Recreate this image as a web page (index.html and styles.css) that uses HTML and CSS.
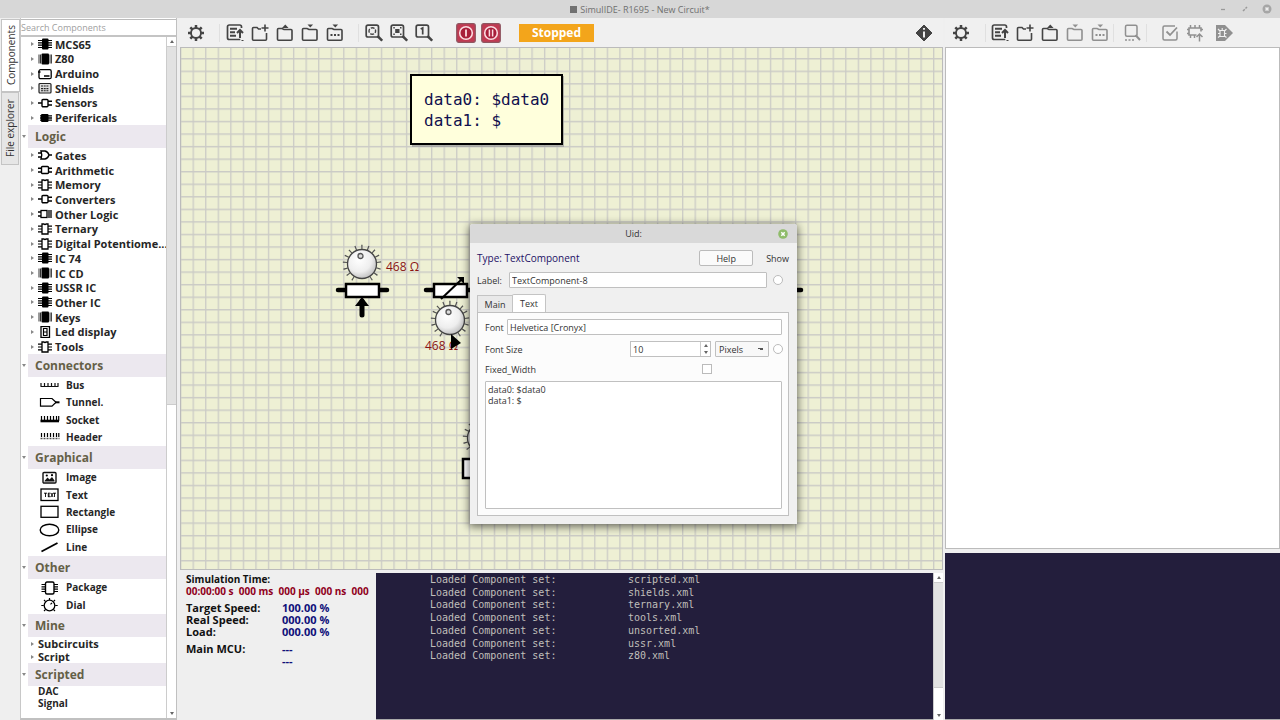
FILE: index.html
```html
<!DOCTYPE html>
<html lang="en">
<head>
<meta charset="utf-8">
<title>SimulIDE- R1695 - New Circuit*</title>
<link rel="stylesheet" href="styles.css">
</head>
<body>
<svg class="defs" aria-hidden="true">
  <defs>
    <symbol id="chip" viewBox="0 0 14 12"><rect x="4" y="0.5" width="6.5" height="11" rx="1" fill="#000"/><path d="M0 2.5h14M0 4.8h14M0 7.2h14M0 9.5h14" stroke="#000" stroke-width="1.2"/></symbol>
    <symbol id="chip-wide" viewBox="0 0 14 12"><rect x="3.5" y="0.5" width="7.5" height="11" rx="1" fill="#000"/><path d="M1 1.5v9M2.5 1.5v9M12 1.5v9M13.4 1.5v9" stroke="#333" stroke-width="1"/></symbol>
    <symbol id="chip-small" viewBox="0 0 14 12"><rect x="3" y="2" width="7.5" height="8" rx="1" fill="#000"/><path d="M2 3.8h3M2 6h3M2 8.2h3M10 3.8h4M10 6h4M10 8.2h4" stroke="#000" stroke-width="1.3"/></symbol>
    <symbol id="chip-open" viewBox="0 0 14 12"><path d="M4 1h2q1 1 2 0h2v10H4z" fill="#fff" stroke="#000" stroke-width="1.3"/><path d="M0 3.2h4M0 6h4M0 8.8h4M10 3.2h4M10 6h4M10 8.8h4" stroke="#000" stroke-width="1.2"/></symbol>
    <symbol id="board" viewBox="0 0 14 12"><rect x="1" y="1.7" width="12.2" height="9" rx="1.5" fill="none" stroke="#000" stroke-width="1.3"/><path d="M0 4h2.5M6 8h5.5" stroke="#000" stroke-width="1.6"/></symbol>
    <symbol id="shield" viewBox="0 0 14 12"><rect x="1" y="1.5" width="12" height="9.5" rx="1" fill="#ddd" stroke="#222" stroke-width="1.2"/><path d="M3 4h8M3 6.6h8M3 8.8h8" stroke="#222" stroke-width="1.1" stroke-dasharray="2 .7"/></symbol>
    <symbol id="sensor" viewBox="0 0 14 12"><rect x="4" y="2.5" width="6" height="7.3" rx="1" fill="none" stroke="#000" stroke-width="1.4"/><path d="M0 6h4M10 4.3h4M10 8h4" stroke="#000" stroke-width="1.4"/></symbol>
    <symbol id="gate" viewBox="0 0 14 12"><path d="M3 2h4q3 .7 4 4-1 3.300-4 4H3q1.500-4 0-8zM0 4h3.500M0 8h3.500M11 6h3" fill="none" stroke="#000" stroke-width="1.4"/></symbol>
    <symbol id="arith" viewBox="0 0 14 12"><rect x="3.500" y="2.500" width="7" height="7" rx="1" fill="none" stroke="#000" stroke-width="1.400"/><path d="M0 4.300h3.500M0 8h3.500M10.500 4.300H14M10.500 8H14" stroke="#000" stroke-width="1.400"/></symbol>
    <symbol id="mixed" viewBox="0 0 14 12"><rect x="3" y="2.500" width="6" height="7" fill="none" stroke="#000" stroke-width="1.300"/><path d="M0 4h3M0 8h3" stroke="#000" stroke-width="1.300"/><path d="M11 2v8M13 2v8" stroke="#222" stroke-width="1.500"/></symbol>
    <symbol id="led" viewBox="0 0 14 12"><rect x="3" y="0.500" width="8.500" height="11" fill="#fff" stroke="#000" stroke-width="1.300"/><path d="M5.500 2.500h3.500v3.500H5.500zM5.500 6h3.500v3.500H5.500z" fill="none" stroke="#000" stroke-width="1.200"/></symbol>

    <symbol id="bus" viewBox="0 0 20 14"><path d="M1 7.500h18M1.500 4v3.500M5 4v3.500M8.500 4v3.500M12 4v3.500M15.500 4v3.500M18.500 4v3.500" stroke="#111" stroke-width="1.200" fill="none"/></symbol>
    <symbol id="tunnel" viewBox="0 0 20 14"><path d="M1 2.500h11.500l4 3.800-4 3.800H1z" fill="none" stroke="#000" stroke-width="1.200"/><path d="M15.500 6.300H20" stroke="#000" stroke-width="2"/></symbol>
    <symbol id="socket" viewBox="0 0 20 14"><path d="M1 8h18.500" stroke="#000" stroke-width="2.600"/><path d="M2 3v5M5 3v5M8 3v5M11 3v5M14 3v5M17 3v5M19.200 3v5" stroke="#000" stroke-width="1.200"/></symbol>
    <symbol id="header" viewBox="0 0 20 14"><path d="M1 8.500h19" stroke="#555" stroke-width="1.600" stroke-dasharray="2 1"/><path d="M2 3v4M5 3v4M8 3v4M11 3v4M14 3v4M17 3v4M19.300 3v4" stroke="#000" stroke-width="1.200"/></symbol>
    <symbol id="image" viewBox="0 0 20 14"><rect x="3.500" y="1.500" width="13" height="10.500" rx="1" fill="none" stroke="#111" stroke-width="1.400"/><path d="M5 10l3-3.500 2 2 2.500-2.500L15 9.500v.9H5z" fill="#111"/><circle cx="7.300" cy="4.500" r="1.100"/><circle cx="12.500" cy="4.200" r="1.100"/></symbol>
    <symbol id="textbox" viewBox="0 0 20 14"><rect x="1.500" y="1" width="17" height="11.500" fill="#fff" stroke="#000" stroke-width="1.300"/><path d="M4.500 5.200h3M6 5v4M8.500 5.200h2.500M8.800 5v4M8.500 7h2M8.500 8.700h2.500M11.500 5l2 4M13.500 5l-2 4M13.500 5.200h3M15 5v4" stroke="#000" stroke-width="0.900"/></symbol>
    <symbol id="rectangle" viewBox="0 0 20 14"><rect x="1.500" y="1.300" width="17" height="11" fill="none" stroke="#000" stroke-width="1.300"/></symbol>
    <symbol id="ellipse" viewBox="0 0 20 14"><ellipse cx="10" cy="7" rx="9.300" ry="5.700" fill="none" stroke="#000" stroke-width="1.400"/></symbol>
    <symbol id="line" viewBox="0 0 20 14"><path d="M2 11.500L18 3" stroke="#000" stroke-width="1.800"/></symbol>
    <symbol id="package" viewBox="0 0 20 14"><rect x="6" y="1" width="8.500" height="12" rx="1.500" fill="#fff" stroke="#000" stroke-width="1.400"/><path d="M2 3.500h4M2 5.800h4M2 8.200h4M2 10.500h4M14.500 3.500h4M14.500 5.800h4M14.500 8.200h4M14.500 10.500h4" stroke="#000" stroke-width="1.200"/></symbol>
    <symbol id="dial" viewBox="0 0 20 14"><circle cx="10" cy="7.500" r="5.300" fill="#fff" stroke="#000" stroke-width="1.300"/><path d="M10 0v2M4.500 2l1.400 1.400M15.500 2l-1.400 1.400M1.800 7.500h2.500M15.700 7.500h2.500M4.500 13l1.400-1.400M15.500 13l-1.400-1.400M11 6.300l1.500-1.500" stroke="#000" stroke-width="1.200"/></symbol>

    <symbol id="gear" viewBox="0 0 18 18"><circle cx="9" cy="9" r="5" fill="none" stroke="currentColor" stroke-width="1.900"/><path d="M9 1v3M9 14v3M1 9h3M14 9h3M3.300 3.300l2.200 2.200M12.500 12.500l2.200 2.200M14.700 3.300l-2.200 2.200M5.500 12.500l-2.200 2.200" stroke="currentColor" stroke-width="2.500"/></symbol>
    <symbol id="recent" viewBox="0 0 18 18"><path d="M15.500 4V2.800Q15.500 1 13.700 1H3.300Q1.500 1 1.500 2.800v10.900q0 1.800 1.800 1.800h11" fill="none" stroke="currentColor" stroke-width="1.700"/><path d="M4 4.800h7M4 8.300h5M4 11.800h6M14 14V6.500M11 9l3-3 3 3" fill="none" stroke="currentColor" stroke-width="2"/><path d="M15.500 16.500h2" stroke="currentColor"/></symbol>
    <symbol id="new" viewBox="0 0 18 18"><path d="M10 5H7.500L6 3.500H2.500Q1.500 3.500 1.500 4.500v10.700q0 1 1 1h12q1 0 1-1V9" fill="none" stroke="currentColor" stroke-width="1.600"/><path d="M14 .5v7M10.500 4h7" stroke="currentColor" stroke-width="1.600"/></symbol>
    <symbol id="open" viewBox="0 0 18 18"><path d="M8 5.500h7q1 0 1 1v8.700q0 1-1 1H2.500q-1 0-1-1V5.500q0-1 1-1h3.500z" fill="none" stroke="currentColor" stroke-width="1.600"/><path d="M6 4L9.300.5 12.600 4z" fill="currentColor"/></symbol>
    <symbol id="save" viewBox="0 0 18 18"><path d="M8 5.500h7q1 0 1 1v8.700q0 1-1 1H2.500q-1 0-1-1V5.500q0-1 1-1h3.500z" fill="none" stroke="currentColor" stroke-width="1.600"/><path d="M6.500.5L9.300 3.500l2.800-3z" fill="currentColor"/></symbol>
    <symbol id="saveas" viewBox="0 0 18 18"><use href="#save"/><path d="M4.500 11h2M8 11h2M11.500 11h2" stroke="currentColor" stroke-width="2"/></symbol>
    <symbol id="lens" viewBox="0 0 18 18"><rect x="1.200" y="1.200" width="12.300" height="11.800" rx="1.800" fill="none" stroke="currentColor" stroke-width="1.700"/><path d="M12.500 12l4.700 4.700" stroke="currentColor" stroke-width="2.500"/></symbol>
    <symbol id="zoomfit" viewBox="0 0 18 18"><use href="#lens"/><circle cx="7.300" cy="7" r="3.300" fill="none" stroke="currentColor" stroke-width="1.400" stroke-dasharray="4 1.180" stroke-dashoffset="2"/></symbol>
    <symbol id="zoomsel" viewBox="0 0 18 18"><use href="#lens"/><path d="M5.200 5h4.300v4H5.200zM3.300 3h1.500v1.500H3.300zM10 3h1.500v1.500H10zM3.300 9.500h1.500V11H3.300zM10 9.500h1.500V11H10z" fill="currentColor"/></symbol>
    <symbol id="zoomone" viewBox="0 0 18 18"><use href="#lens"/><path d="M5.700 5l2-1v6.500" fill="none" stroke="currentColor" stroke-width="1.700"/></symbol>
    <symbol id="find" viewBox="0 0 18 18"><rect x="2.500" y="1.200" width="11.500" height="11" rx="1.500" fill="none" stroke="currentColor" stroke-width="1.500"/><path d="M12.500 11l4.500 5" stroke="currentColor" stroke-width="2"/><path d="M2 16h2M5.500 16h2M9 16h2" stroke="currentColor" stroke-width="1.600"/></symbol>
    <symbol id="check" viewBox="0 0 18 18"><path d="M16 7.500v7q0 1.500-1.500 1.500h-11Q2 16 2 14.500v-11Q2 2 3.500 2H14" fill="none" stroke="currentColor" stroke-width="1.500"/><path d="M5.500 7.500l3.500 3.500 7-7.500" fill="none" stroke="currentColor" stroke-width="1.800"/></symbol>
    <symbol id="upload" viewBox="0 0 18 18"><path d="M10.500 11H3V4h12v3.500" fill="none" stroke="currentColor" stroke-width="1.600"/><path d="M4.500 1v3M9 1v3M13.500 1v3M4.500 11v3M8.500 11v3M1 5.500h2M1 9.500h2M15 5.500h2M13.500 17.500V10M10.500 13l3-3 3 3" fill="none" stroke="currentColor" stroke-width="1.500"/></symbol>
    <symbol id="debug" viewBox="0 0 18 18"><path d="M1 1h9l8 8-8 8H1z" fill="currentColor"/><path d="M5 6.500h4.500v6H5zM7.200 4v3M3 5l2 2M11.500 5l-2 2M3 9.500h2M9.500 9.500h2M3 13.500l2-1.500M11.500 13.500l-2-1.500" fill="none" stroke="#f0f0f0" stroke-width="1.100"/></symbol>
    <symbol id="info" viewBox="0 0 18 18"><path d="M9 1l8 8-8 8-8-8z" fill="currentColor" stroke="currentColor" stroke-linejoin="round"/><path d="M9 4v1.800M9 7.500v6" stroke="#fff" stroke-width="1.800"/></symbol>
    <symbol id="power" viewBox="0 0 20 20"><rect x=".7" y=".7" width="18.600" height="18.600" rx="2" fill="#c03a52" stroke="#8e5560" stroke-width="1.200"/><circle cx="10" cy="10" r="6.300" fill="#a81e3a" stroke="#fbdde2" stroke-width="1.600"/><path d="M10 6.500v7" stroke="#fbdde2" stroke-width="1.800"/></symbol>
    <symbol id="pause" viewBox="0 0 20 20"><rect x=".7" y=".7" width="18.600" height="18.600" rx="2" fill="#c03a52" stroke="#8e5560" stroke-width="1.200"/><circle cx="10" cy="10" r="6.300" fill="#a81e3a" stroke="#fbdde2" stroke-width="1.600"/><path d="M8.400 6.500v7M11.600 6.500v7" stroke="#fbdde2" stroke-width="1.500"/></symbol>

    <radialGradient id="knob" cx=".4" cy=".35" r=".7"><stop offset="0" stop-color="#fff"/><stop offset=".6" stop-color="#eee"/><stop offset="1" stop-color="#bbb"/></radialGradient>
    <g id="knob-dial">
      <path d="M-8.500 14.700A17 17 0 1 1 8.500 14.700" pathLength="300" fill="none" stroke="#555" stroke-width="4.500" stroke-dasharray="4 17.100"/>
      <circle r="14.500" fill="url(#knob)" stroke="#444" stroke-width="1.300"/>
      <circle cx="-1.500" cy="-8" r="2.500" fill="#ddd" stroke="#555" stroke-width="1.300"/>
    </g>
    <pattern id="grid" x="0" y="-1.500" width="12.550" height="12.550" patternUnits="userSpaceOnUse"><path d="M0 .7H12.550M.7 0V12.550" stroke="#cbcbc6" stroke-width="1.300"/></pattern>
  </defs>
</svg>

<div class="app">
  <header class="titlebar">
    <span class="title"><i class="app-mark"></i>SimulIDE- R1695 - New Circuit*</span>
    <div class="window-buttons">
      <button aria-label="Minimize"><svg viewBox="0 0 10 10"><path d="M3 5.500h4" stroke="#999" stroke-width="1.300"/></svg></button>
      <button aria-label="Restore"><svg viewBox="0 0 10 10"><path d="M3 7l1.800-1.800M5.500 4.500L7 3" stroke="#999" stroke-width="1.500"/></svg></button>
      <button aria-label="Close"><svg viewBox="0 0 10 10"><circle cx="5" cy="5" r="4.500" fill="#a6a6a6"/><path d="M3.500 3.500l3 3M6.500 3.500l-3 3" stroke="#eee" stroke-width="1.500"/></svg></button>
    </div>
  </header>

  <div class="workspace">
    <div class="side-tabs" role="tablist">
      <button role="tab" aria-selected="true" class="side-tab selected">Components</button>
      <button role="tab" aria-selected="false" class="side-tab">File explorer</button>
    </div>

    <aside class="sidebar">
      <input class="search" type="search" placeholder="Search Components" aria-label="Search Components">
      <div class="tree-area">
        <div class="tree">
          <ul class="list families families-top">
            <li><svg><use href="#chip"/></svg>MCS65</li>
            <li><svg><use href="#chip-wide"/></svg>Z80</li>
            <li><svg><use href="#board"/></svg>Arduino</li>
            <li><svg><use href="#shield"/></svg>Shields</li>
            <li><svg><use href="#sensor"/></svg>Sensors</li>
            <li><svg><use href="#chip-small"/></svg>Perifericals</li>
          </ul>
          <h2>Logic</h2>
          <ul class="list families families-logic">
            <li><svg><use href="#gate"/></svg>Gates</li>
            <li><svg><use href="#arith"/></svg>Arithmetic</li>
            <li><svg><use href="#chip-open"/></svg>Memory</li>
            <li><svg><use href="#sensor"/></svg>Converters</li>
            <li><svg><use href="#mixed"/></svg>Other Logic</li>
            <li><svg><use href="#chip-open"/></svg>Ternary</li>
            <li><svg><use href="#chip-open"/></svg>Digital Potentiome...</li>
            <li><svg><use href="#chip"/></svg>IC 74</li>
            <li><svg><use href="#chip-wide"/></svg>IC CD</li>
            <li><svg><use href="#chip"/></svg>USSR IC</li>
            <li><svg><use href="#chip"/></svg>Other IC</li>
            <li><svg><use href="#chip-wide"/></svg>Keys</li>
            <li><svg><use href="#led"/></svg>Led display</li>
            <li><svg><use href="#chip-open"/></svg>Tools</li>
          </ul>
          <h2>Connectors</h2>
          <ul class="list parts parts-connectors">
            <li><svg><use href="#bus"/></svg>Bus</li>
            <li><svg><use href="#tunnel"/></svg>Tunnel.</li>
            <li><svg><use href="#socket"/></svg>Socket</li>
            <li><svg><use href="#header"/></svg>Header</li>
          </ul>
          <h2>Graphical</h2>
          <ul class="list parts parts-graphical">
            <li><svg><use href="#image"/></svg>Image</li>
            <li><svg><use href="#textbox"/></svg>Text</li>
            <li><svg><use href="#rectangle"/></svg>Rectangle</li>
            <li><svg><use href="#ellipse"/></svg>Ellipse</li>
            <li><svg><use href="#line"/></svg>Line</li>
          </ul>
          <h2>Other</h2>
          <ul class="list parts parts-other">
            <li><svg><use href="#package"/></svg>Package</li>
            <li><svg><use href="#dial"/></svg>Dial</li>
          </ul>
          <h2>Mine</h2>
          <ul class="list families families-mine">
            <li>Subcircuits</li>
            <li>Script</li>
          </ul>
          <h2>Scripted</h2>
          <ul class="list plain">
            <li>DAC</li>
            <li>Signal</li>
          </ul>
        </div>
        <div class="scrollbar tree-scroll"><i class="up"></i><i class="track"></i><i class="thumb"></i><i class="down"></i></div>
      </div>
    </aside>

    <main class="center">
      <div class="toolbar">
        <button aria-label="Settings"><svg><use href="#gear"/></svg></button>
        <i class="sep"></i>
        <button aria-label="Recent circuits"><svg><use href="#recent"/></svg></button>
        <button aria-label="New circuit"><svg><use href="#new"/></svg></button>
        <button aria-label="Open circuit"><svg><use href="#open"/></svg></button>
        <button aria-label="Save circuit"><svg><use href="#save"/></svg></button>
        <button aria-label="Save circuit as"><svg><use href="#saveas"/></svg></button>
        <i class="sep"></i>
        <button aria-label="Zoom to fit"><svg><use href="#zoomfit"/></svg></button>
        <button aria-label="Zoom to selection"><svg><use href="#zoomsel"/></svg></button>
        <button aria-label="Zoom to scale 1"><svg><use href="#zoomone"/></svg></button>
        <div class="run-controls">
          <button aria-label="Start simulation"><svg><use href="#power"/></svg></button>
          <button aria-label="Pause simulation"><svg><use href="#pause"/></svg></button>
        </div>
        <span class="status">Stopped</span>
        <button class="info-button" aria-label="Information"><svg><use href="#info"/></svg></button>
      </div>

      <svg class="canvas" role="img" aria-label="Circuit">
        <rect width="100%" height="100%" fill="#eef0d4"/>
        <rect width="100%" height="100%" fill="url(#grid)"/>
        <rect x="232" y="29" width="152" height="71" fill="#999" opacity=".7"/>
        <rect x="231" y="28" width="151" height="69" fill="#ffffdc" stroke="#000" stroke-width="2"/>
        <text class="note" x="244" y="58">data0: $data0</text>
        <text class="note" x="244" y="79">data1: $</text>

        <use href="#knob-dial" x="182" y="217"/>
        <path d="M158 243h49" stroke="#000" stroke-width="4.500" stroke-linecap="round"/>
        <rect x="166" y="237" width="33" height="13" fill="#fff" stroke="#000" stroke-width="2.500"/>
        <path d="M182 268V254" stroke="#000" stroke-width="5" stroke-linecap="round"/>
        <path d="M175 259l7-9 7 9z"/>
        <text class="ohm" x="206" y="224">468 Ω</text>

        <path d="M246 243h46" stroke="#000" stroke-width="4.500" stroke-linecap="round"/>
        <rect x="254" y="237" width="33" height="13" fill="#fff" stroke="#000" stroke-width="2.500"/>
        <path d="M261 252l20-19" stroke="#000" stroke-width="2"/>
        <path d="M277 230h7v7z"/>
        <use href="#knob-dial" x="270" y="273"/>
        <text class="ohm" x="245" y="303">468 Ω</text>
        <path d="M271 287v15l10-6z"/>

        <path d="M600 243h21" stroke="#000" stroke-width="4.500" stroke-linecap="round"/>
        <use href="#knob-dial" x="302" y="391"/>
        <rect x="283" y="412" width="33" height="19" fill="#fff" stroke="#000" stroke-width="2.500"/>
      </svg>

      <div class="bottom">
        <section class="sim-info">
          <div class="sim-label">Simulation Time:</div>
          <div class="sim-time">00:00:00 s&nbsp; 000 ms&nbsp; 000 µs&nbsp; 000 ns&nbsp; 000</div>
          <dl>
            <dt>Target Speed:</dt><dd>100.00 %</dd>
            <dt>Real Speed:</dt><dd>000.00 %</dd>
            <dt>Load:</dt><dd>000.00 %</dd>
          </dl>
          <dl>
            <dt>Main MCU:</dt><dd>---</dd>
            <dt></dt><dd>---</dd>
          </dl>
        </section>
        <section class="console">
          <div class="log">
            <span>Loaded Component set:</span><span>scripted.xml</span>
            <span>Loaded Component set:</span><span>shields.xml</span>
            <span>Loaded Component set:</span><span>ternary.xml</span>
            <span>Loaded Component set:</span><span>tools.xml</span>
            <span>Loaded Component set:</span><span>unsorted.xml</span>
            <span>Loaded Component set:</span><span>ussr.xml</span>
            <span>Loaded Component set:</span><span>z80.xml</span>
          </div>
        </section>
        <div class="scrollbar console-scroll"><i class="up"></i><i class="track"></i><i class="thumb"></i><i class="down"></i></div>
      </div>
    </main>

    <section class="editor">
      <div class="toolbar">
        <button aria-label="Editor settings"><svg><use href="#gear"/></svg></button>
        <i class="sep"></i>
        <button aria-label="Recent files"><svg><use href="#recent"/></svg></button>
        <button aria-label="New file"><svg><use href="#new"/></svg></button>
        <button aria-label="Open file"><svg><use href="#open"/></svg></button>
        <button aria-label="Save file" disabled><svg><use href="#save"/></svg></button>
        <button aria-label="Save file as" disabled><svg><use href="#saveas"/></svg></button>
        <i class="sep"></i>
        <button aria-label="Find" disabled><svg><use href="#find"/></svg></button>
        <i class="sep"></i>
        <button aria-label="Compile" disabled><svg><use href="#check"/></svg></button>
        <button aria-label="Upload" disabled><svg><use href="#upload"/></svg></button>
        <button aria-label="Debug" disabled class="debug-button"><svg><use href="#debug"/></svg></button>
      </div>
      <div class="document"></div>
      <div class="output"></div>
    </section>
  </div>

  <div class="dialog" role="dialog" aria-label="Uid:">
    <header class="dialog-title">
      <span>Uid:</span>
      <button aria-label="Close dialog"><svg viewBox="0 0 10 10"><circle cx="5" cy="5" r="4.800" fill="#8fbc6a"/><path d="M3.300 3.300l3.400 3.400M6.700 3.300L3.300 6.700" stroke="#fff" stroke-width="1.500"/></svg></button>
    </header>
    <div class="dialog-body">
      <div class="row type-row"><span class="type">Type: TextComponent</span><button class="help">Help</button><span>Show</span></div>
      <div class="row label-row"><label for="label">Label:</label><input id="label" type="text" value="TextComponent-8"><input type="radio" aria-label="Show label"></div>
      <div class="tabs" role="tablist">
        <button role="tab" aria-selected="false">Main</button>
        <button role="tab" aria-selected="true">Text</button>
      </div>
      <div class="panel">
        <div class="row font-row"><label for="font">Font</label><input id="font" type="text" value="Helvetica [Cronyx]"></div>
        <div class="row size-row">
          <label for="size">Font Size</label>
          <span class="spin"><input id="size" type="text" value="10"><span class="steps"><i class="up"></i><i class="down"></i></span></span>
          <select aria-label="Unit"><option>Pixels</option></select>
          <input type="radio" aria-label="Show font size">
        </div>
        <div class="row width-row"><label for="fixed">Fixed_Width</label><input id="fixed" type="checkbox"></div>
        <textarea aria-label="Text">data0: $data0
data1: $</textarea>
      </div>
    </div>
  </div>
</div>
</body>
</html>
```
FILE: styles.css
```css
* { box-sizing: border-box; }

body {
  margin: 0;
  font-family: "Open Sans", "Noto Sans", sans-serif;
  font-size: 9px;
  color: #333;
  background: #efefef;
}

button, input, select, textarea {
  font: inherit;
  color: inherit;
  margin: 0;
  outline: 0;
}

button { padding: 0; border: 0; background: none; }
ul, dl, dd, h2 { margin: 0; padding: 0; }
ul { list-style: none; }
.defs { position: absolute; width: 0; height: 0; }

.app {
  position: relative;
  display: flex;
  flex-direction: column;
  height: 100vh;
  overflow: hidden;
}

/* Title bar */
.titlebar {
  display: grid;
  grid-template-columns: 1fr auto 1fr;
  align-items: center;
  height: 18px;
  background: #d7d7d7;
  color: #707070;
}
.title { grid-column: 2; display: flex; align-items: center; gap: 3px; }
.app-mark { width: 7px; height: 7px; background: #707070; }
.window-buttons { display: flex; justify-content: flex-end; gap: 12px; padding-right: 8px; }
.window-buttons button { display: flex; }
.window-buttons svg { width: 10px; height: 10px; }

.workspace { flex: 1; display: flex; min-height: 0; }

/* Vertical tabs */
.side-tabs { width: 20px; padding-top: 1px; flex: none; }
.side-tab {
  writing-mode: vertical-rl;
  transform: rotate(180deg);
  display: flex;
  align-items: center;
  justify-content: center;
  width: 18px;
  height: 73px;
  margin-left: 1px;
  border: 1px solid #c4c4c4;
  background: #e6e6e6;
  font-size: 10px;
}
.side-tab.selected { width: 19px; background: #fff; }

/* Component tree */
.sidebar {
  flex: none;
  display: flex;
  flex-direction: column;
  width: 157px;
  border-right: 1px solid #c0c0c0;
  border-left: 1px solid #c8c8c8;
  margin-right: 3px;
  background: #fff;
  border-bottom: 2px solid #c0c0c0;
}
.search {
  appearance: none;
  height: 18px;
  margin-top: 1px;
  padding: 0;
  border: 0;
  border-top: 1px solid #bbb;
  border-bottom: 2px solid #c4c4c4;
  background: #fff;
}
.search::placeholder { color: #a0a0a0; opacity: 1; }
.tree-area { flex: 1; display: flex; min-height: 0; overflow: hidden; }
.tree { flex: 1; min-width: 0; color: #262626; font-weight: 700; font-size: 11px; white-space: nowrap; }
.tree h2 {
  position: relative;
  height: 23px;
  margin-left: 7px;
  padding-left: 7px;
  background: #ece8ef;
  color: #655f47;
  font-size: 12px;
  line-height: 23px;
}
.tree h2::before {
  content: "";
  position: absolute;
  left: -6px;
  top: 10px;
  border: 2px solid transparent;
  border-top: 3px solid #888;
}
.list { display: grid; grid-auto-rows: 1fr; }
.list li { display: flex; align-items: center; min-height: 0; line-height: 11px; }
.list svg { flex: none; }
.families li { padding-left: 10px; }
.families li::before { content: ""; border: 2px solid transparent; border-left: 3px solid #888; margin-right: 2px; }
.families svg { width: 14px; height: 12px; margin-right: 3px; }
.parts { font-size: 10px; }
.parts li { padding-left: 18px; }
.parts svg { width: 21px; height: 14px; margin-right: 6px; }
.plain { height: 23px; padding-left: 17px; font-size: 10px; }
.families-top { height: 88px; }
.families-logic { height: 206px; }
.families-mine { height: 26px; }
.parts-connectors { height: 69px; }
.parts-graphical { height: 87px; }
.parts-other { height: 35px; }

/* Scrollbars */
.scrollbar { flex: none; display: flex; flex-direction: column; width: 10px; border-left: 1px solid #ccc; background: #fff; }
.up, .down { display: flex; align-items: center; justify-content: center; height: 9px; }
.up::before { content: ""; border: 2px solid transparent; border-bottom: 3px solid #666; border-top: 0; }
.down::before { content: ""; border: 2px solid transparent; border-top: 3px solid #666; border-bottom: 0; }
.track { background: #e2e2e2; border: 1px solid #ccc; border-width: 1px 0; }
.tree-scroll .track { flex: 358; }
.tree-scroll .thumb { flex: 304; }
.console-scroll .track { flex: 105; }
.console-scroll .thumb { flex: 23; }

/* Main column */
.center { flex: 763; display: flex; flex-direction: column; min-width: 0; }
.toolbar {
  flex: none;
  display: flex;
  align-items: center;
  height: 29px;
  padding-left: 3px;
  color: #444;
  background: #f0f0f0;
}
.toolbar button { display: flex; align-items: center; justify-content: center; width: 25px; height: 24px; flex: none; }
.toolbar svg { width: 18px; height: 18px; }
.toolbar button:disabled { color: #909090; }
.sep { width: 1px; height: 18px; margin: 0 2px 0 11px; background: #e0e0e0; }
.run-controls { display: flex; margin-left: 17px; }
.toolbar .run-controls svg { width: 20px; height: 20px; }
.status {
  width: 75px;
  height: 18px;
  margin-left: 16px;
  background: #f3a51b;
  color: #fff;
  font-size: 12px;
  font-weight: 700;
  line-height: 18px;
  text-align: center;
}
.toolbar .info-button { margin-left: auto; margin-right: 7px; }
.canvas { flex: 1; display: block; width: 100%; min-height: 0; outline: 1px solid #bbb; outline-offset: -1px; }
.note { font-family: "DejaVu Sans Mono", monospace; font-size: 16px; fill: #10104e; }
.ohm { font-size: 12px; fill: #8a1414; }

.bottom { flex: none; display: flex; height: 147px; margin-top: 3px; }
.sim-info {
  flex: none;
  width: 196px;
  padding: 0 0 0 6px;
  color: #111;
  font-size: 11px;
  font-weight: 700;
  line-height: 12px;
  white-space: nowrap;
}
.sim-label, .sim-time { font-size: 10px; line-height: 12px; }
.sim-time { color: #900020; }
.sim-info dl { display: grid; grid-template-columns: 96px 1fr; grid-auto-rows: 12px; margin-top: 5px; }
.sim-info dd { color: #10107a; }
.console { flex: 1; min-width: 0; background: #231e3c; color: #c0beba; border-bottom: 1px solid #aaa; }
.log {
  display: grid;
  grid-template-columns: 198px 1fr;
  grid-template-rows: repeat(7, minmax(0, 1fr));
  height: 89px;
  padding-left: 54px;
  font-family: "DejaVu Sans Mono", monospace;
  font-size: 10px;
  line-height: 13px;
  white-space: nowrap;
}

/* Editor column */
.editor { flex: 335; display: flex; flex-direction: column; min-width: 0; margin-left: 2px; }
.editor .sep { margin: 0 1px 0 12px; }
.editor .sep ~ .sep { margin: 0 5px 0 1px; }
.editor .sep ~ .sep ~ .sep { margin: 0 10px 0 2px; }
.toolbar .debug-button { margin-left: 4px; }
.document { flex: 1; background: #fff; border: 1px solid #bbb; }
.output { flex: none; height: 167px; margin-top: 4px; background: #231e3c; border-bottom: 1px solid #aaa; }

/* Properties dialog */
.dialog {
  position: absolute;
  left: 470px;
  top: 224px;
  width: 327px;
  background: #f0f0f0;
  border-radius: 3px 3px 0 0;
  box-shadow: 0 2px 8px 1px rgba(0, 0, 0, .55);
}
.dialog-title {
  display: grid;
  grid-template-columns: 1fr auto 1fr;
  align-items: center;
  height: 19px;
  padding: 0 9px;
  border-radius: 3px 3px 0 0;
  background: #d9d9d9;
}
.dialog-title span { grid-column: 2; }
.dialog-title button { display: flex; justify-self: end; }
.dialog-title svg { width: 10px; height: 10px; }
.dialog-body { padding: 7px 8px 8px 7px; }
.row { display: flex; align-items: center; }
.type { flex: 1; color: #1d1166; font-size: 10px; }
.help { width: 54px; height: 16px; margin-right: 13px; border: 1px solid #bbb; border-radius: 2px; background: #fafafa; }
.dialog input[type="text"], .dialog select, .dialog textarea { border: 1px solid #c0c0c0; background: #fff; border-radius: 1px; }
.dialog input[type="text"] { flex: 1; min-width: 0; height: 16px; padding: 0 2px; }
.dialog input[type="radio"], .dialog input[type="checkbox"] {
  appearance: none;
  flex: none;
  width: 10px;
  height: 10px;
  border: 1px solid #bbb;
  background: #fff;
}
.dialog input[type="radio"] { border-radius: 50%; }
.label-row { margin-top: 6px; }
.label-row label { width: 32px; }
.label-row input[type="radio"] { margin: 0 6px; }
.tabs { display: flex; align-items: flex-end; margin-top: 6px; }
.tabs button { height: 17px; width: 36px; border: 1px solid #c4c4c4; border-bottom: 0; background: #e9e9e9; }
.tabs button[aria-selected="true"] { width: 34px; height: 18px; margin-left: -1px; background: #fff; border-radius: 2px 2px 0 0; }
.panel { padding: 6px 6px 6px 7px; border: 1px solid #c0c0c0; background: #fcfcfc; }
.font-row label { width: 22px; }
.size-row { margin-top: 6px; }
.size-row label { flex: 1; }
.spin { display: flex; width: 81px; border: 1px solid #c0c0c0; background: #fff; }
.dialog .spin input[type="text"] { border: 0; height: 14px; }
.steps { display: flex; flex-direction: column; width: 10px; border-left: 1px solid #ccc; }
.steps i { height: 7px; }
.dialog select {
  appearance: none;
  width: 54px;
  height: 16px;
  margin: 0 4px;
  padding: 0 3px;
  background:
    linear-gradient(45deg, transparent 50%, #555 50%) no-repeat right 7px center / 3px 3px,
    linear-gradient(-45deg, transparent 50%, #555 50%) no-repeat right 4px center / 3px 3px,
    #f8f8f8;
}
.size-row input[type="radio"] { margin-right: -1px; }
.width-row { height: 16px; margin-top: 4px; }
.width-row label { flex: 1; }
.width-row input { margin-right: 70px; }
.dialog textarea { display: block; width: 100%; height: 128px; margin-top: 4px; padding: 2px; resize: none; line-height: 11px; }
```
